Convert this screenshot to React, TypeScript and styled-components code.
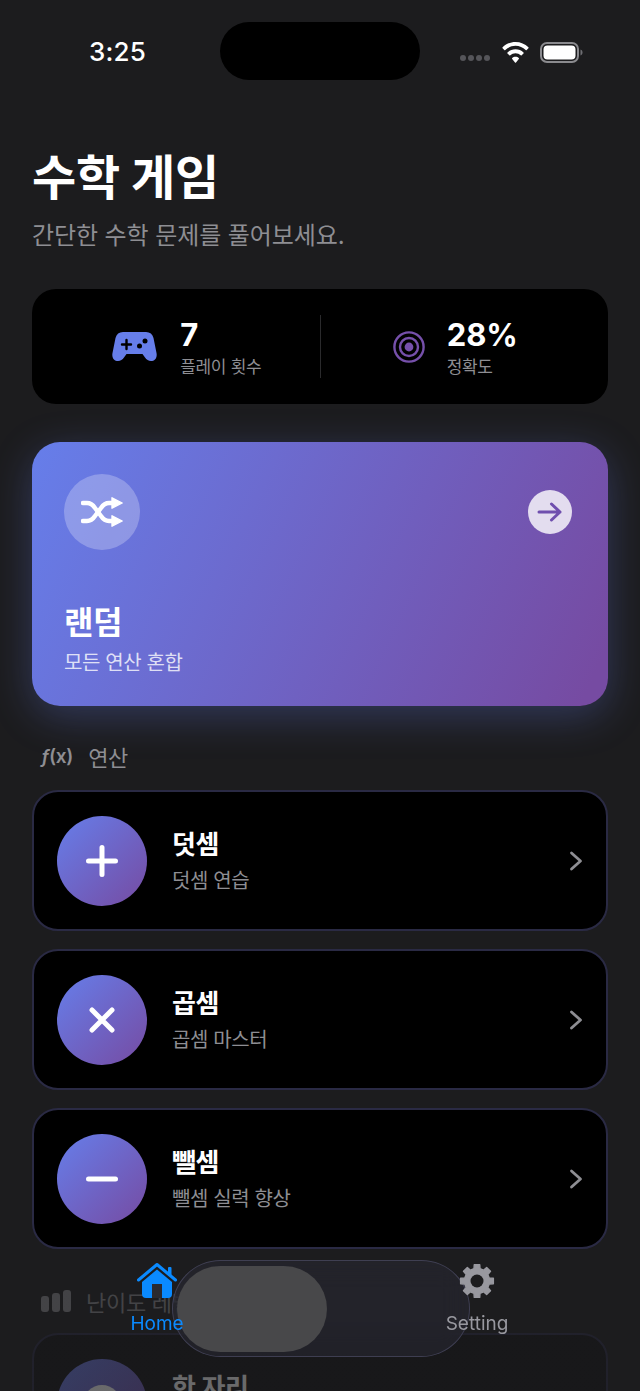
import React from "react";
import styled, { createGlobalStyle } from "styled-components";

const Global = createGlobalStyle`
  html, body { margin: 0; padding: 0; background: #1c1c1e; }
  * { box-sizing: border-box; }
`;

const FONT = `Inter, "Noto Sans CJK KR", "Noto Sans", sans-serif`;

const Screen = styled.div`
  position: relative;
  width: 640px;
  height: 1391px;
  overflow: hidden;
  background: #1c1c1e;
  font-family: ${FONT};
  color: #fff;
`;

const StatusBar = styled.div`
  display: flex;
  align-items: center;
  height: 104px;
  padding: 0 57px 0 89px;
`;
const Time = styled.div`
  font-size: 26px;
  font-weight: 500;
  line-height: 32px;
  letter-spacing: 0.2px;
`;
const Island = styled.div`
  position: absolute;
  left: 220px;
  top: 22px;
  width: 200px;
  height: 58px;
  border-radius: 29px;
  background: #000;
`;
const StatusIcons = styled.div`
  margin-left: auto;
  display: flex;
  align-items: center;
  gap: 11px;
`;
const Dots = styled.div`
  display: flex;
  gap: 2px;
  margin-top: 12px;
  margin-right: 1px;
`;
const Dot = styled.span`
  width: 6px;
  height: 6px;
  border-radius: 50%;
  background: #55555a;
`;
const Content = styled.main`
  padding: 39px 32px 0;
`;
const Title = styled.h1`
  margin: 0;
  font-size: 48px;
  line-height: 70px;
  font-weight: 700;
  letter-spacing: -0.2px;
`;
const Subtitle = styled.p`
  margin: 6px 0 0;
  font-size: 24px;
  line-height: 34px;
  color: #8e8e93;
  letter-spacing: -0.1px;
`;
const StatsCard = styled.section`
  margin-top: 36px;
  height: 115px;
  border-radius: 24px;
  background: #000;
  display: flex;
  align-items: center;
`;
const Stat = styled.div<{ $side: "left" | "right"; $gap: number; $inset: number }>`
  flex: 0 0 calc(50% - 0.5px);
  display: flex;
  align-items: center;
  justify-content: center;
  gap: ${(p) => p.$gap}px;
  padding-${(p) => p.$side}: ${(p) => p.$inset}px;
`;
const StatText = styled.div`
  display: flex;
  flex-direction: column;
`;
const StatValue = styled.div`
  font-size: 31px;
  line-height: 40px;
  font-weight: 700;
`;
const StatLabel = styled.div`
  font-size: 17px;
  line-height: 24px;
  color: #8e8e93;
  letter-spacing: -0.3px;
`;
const Divider = styled.div`
  width: 1px;
  height: 63px;
  background: #2a2a2c;
`;
const RandomCard = styled.section`
  margin-top: 38px;
  height: 264px;
  border-radius: 28px;
  padding: 32px 32px 28px;
  background: linear-gradient(115deg, #667eea 0%, #764ba2 96%);
  box-shadow: 0 10px 40px rgba(102, 126, 234, 0.3);
  display: flex;
  flex-direction: column;
`;
const RandomTop = styled.div`
  display: flex;
  align-items: center;
  justify-content: space-between;
  padding-right: 4px;
`;
const ShuffleBadge = styled.div`
  width: 76px;
  height: 76px;
  border-radius: 50%;
  background: rgba(255, 255, 255, 0.25);
  display: grid;
  place-items: center;
`;
const ArrowBadge = styled.div`
  width: 44px;
  height: 44px;
  border-radius: 50%;
  background: rgba(255, 255, 255, 0.8);
  display: grid;
  place-items: center;
`;
const RandomTitle = styled.div`
  margin-top: auto;
  font-size: 32px;
  line-height: 46px;
  font-weight: 700;
  letter-spacing: -0.4px;
`;
const RandomSub = styled.div`
  margin-top: 2px;
  font-size: 20px;
  line-height: 30px;
  color: rgba(255, 255, 255, 0.8);
  letter-spacing: -0.4px;
`;
const SectionHeader = styled.div<{ $top: number }>`
  display: flex;
  align-items: center;
  gap: 15px;
  padding-left: 9px;
  height: 30px;
  margin-top: ${(p) => p.$top}px;
  color: #8e8e93;
  font-size: 22px;
  letter-spacing: -0.3px;
`;
const FxGlyph = styled.span`
  font-size: 19px;
  font-weight: 600;
`;
const List = styled.div<{ $top: number }>`
  margin-top: ${(p) => p.$top}px;
  display: flex;
  flex-direction: column;
  gap: 18px;
`;
const OpRow = styled.article<{ $faint?: boolean }>`
  height: 141px;
  flex: none;
  border-radius: 26px;
  background: ${(p) => (p.$faint ? "#101012" : "#000")};
  border: 2px solid #2a2a44;
  display: flex;
  align-items: center;
  padding: 0 23px;
`;
const OpCircle = styled.div`
  width: 90px;
  height: 90px;
  border-radius: 50%;
  flex: none;
  background: linear-gradient(135deg, #667eea 0%, #764ba2 100%);
  display: grid;
  place-items: center;
`;
const OpText = styled.div`
  margin-left: 25px;
  padding-top: 1px;
  flex: 1;
`;
const OpTitle = styled.div`
  font-size: 26px;
  line-height: 36px;
  font-weight: 700;
  letter-spacing: -0.3px;
`;
const OpSub = styled.div`
  margin-top: 3px;
  font-size: 20px;
  line-height: 30px;
  color: #8e8e93;
  letter-spacing: -0.4px;
`;
const BottomFade = styled.div`
  position: absolute;
  left: 0;
  right: 0;
  top: 1250px;
  bottom: 0;
  background: linear-gradient(
    180deg,
    rgba(28, 28, 30, 0) 0%,
    rgba(28, 28, 30, 0.66) 12%,
    rgba(28, 28, 30, 0.66) 100%
  );
`;
const TabBar = styled.nav`
  position: absolute;
  left: 0;
  right: 0;
  top: 1260px;
  height: 97px;
`;
const Glass = styled.div`
  position: absolute;
  left: 172px;
  top: 0;
  width: 298px;
  height: 97px;
  border-radius: 49px;
  background: rgba(44, 44, 58, 0.45);
  border: 1px solid rgba(110, 110, 150, 0.38);
  backdrop-filter: blur(14px);
`;
const GlassThumb = styled.div`
  position: absolute;
  left: 4px;
  top: 5px;
  width: 150px;
  height: 86px;
  border-radius: 43px;
  background: #48484a;
`;
const TabItem = styled.div<{ $center: number; $active?: boolean }>`
  position: absolute;
  top: 3px;
  left: ${(p) => p.$center - 50}px;
  width: 100px;
  display: flex;
  flex-direction: column;
  align-items: center;
  font-size: 19px;
  line-height: 24px;
  color: ${(p) => (p.$active ? "#0a8aff" : "#98989f")};
`;
const TabIcon = styled.div`
  height: 36px;
  margin-bottom: 13px;
  display: flex;
  align-items: center;
  justify-content: center;
`;

const Wifi = () => (
  <svg width="27" height="21" viewBox="0 0 27 21" fill="#fff">
    <path d="M13.5 0C8.4 0 3.9 2 .6 5.2c-.3.3-.3.7 0 1l1.7 1.8c.3.3.7.3 1 0C6 5.4 9.6 3.8 13.5 3.8s7.5 1.6 10.2 4.2c.3.3.7.3 1 0l1.7-1.8c.3-.3.3-.7 0-1C23.1 2 18.6 0 13.5 0z" />
    <path d="M13.5 7.3c-3.1 0-5.9 1.2-8 3.2-.3.3-.3.7 0 1l1.8 1.8c.3.3.7.3 1 0 1.4-1.3 3.2-2.1 5.2-2.1s3.8.8 5.2 2.1c.3.3.7.3 1 0l1.8-1.8c.3-.3.3-.7 0-1-2.1-2-4.9-3.2-8-3.2z" />
    <path d="M13.5 14.8c-1.3 0-2.4.5-3.3 1.3-.3.3-.3.7 0 1l2.8 3.3c.3.3.7.3 1 0l2.8-3.3c.3-.3.3-.7 0-1-.9-.8-2-1.3-3.3-1.3z" />
  </svg>
);

const Battery = () => (
  <svg width="43" height="21" viewBox="0 0 43 21">
    <rect x="1" y="1" width="37" height="19" rx="6" fill="none" stroke="#8a8a8e" strokeWidth="2" />
    <rect x="3.5" y="3.5" width="32" height="14" rx="4" fill="#fff" />
    <path d="M40.5 7.5c1.3.4 2 1.6 2 3s-.7 2.6-2 3z" fill="#6e6e73" />
  </svg>
);

const GamePad = () => (
  <svg width="45" height="29" viewBox="0 0 45 29">
    <path
      d="M11 0H34C38 0 40.5 2 41.5 6L44.5 21C45.5 26 42.5 29 39 29C36.5 29 34.5 27.5 33 25.5L30.5 22H14.5L12 25.5C10.5 27.5 8.5 29 6 29C2.5 29 -.5 26 .5 21L3.5 6C4.5 2 7 0 11 0Z"
      fill="#667eea"
    />
    <path d="M14.5 8v9M10 12.5h9" stroke="#000" strokeWidth="2.4" strokeLinecap="round" />
    <circle cx="27.5" cy="14" r="2.5" fill="#000" />
    <circle cx="33" cy="9" r="2.5" fill="#000" />
  </svg>
);

const Target = () => (
  <svg width="32" height="32" viewBox="0 0 32 32" fill="none" stroke="#7650ab" strokeWidth="2.4">
    <circle cx="16" cy="16" r="14.6" />
    <circle cx="16" cy="16" r="9" />
    <circle cx="16" cy="16" r="4.4" fill="#7650ab" stroke="none" />
  </svg>
);

const Shuffle = () => (
  <svg width="42" height="30" viewBox="0 0 42 30" fill="none" stroke="#fff" strokeWidth="4.4" strokeLinecap="round" strokeLinejoin="round">
    <path d="M2 6h4c4 0 6 2 8 5l6 8c2 3 4 5 8 5h4" />
    <path d="M2 24h4c4 0 6-2 8-5l6-8c2-3 4-5 8-5h4" />
    <path d="M31 .8 41.2 6 31 11.2z" fill="#fff" strokeWidth="1.4" />
    <path d="M31 18.8 41.2 24 31 29.2z" fill="#fff" strokeWidth="1.4" />
  </svg>
);

const ArrowRight = () => (
  <svg width="26" height="22" viewBox="0 0 26 22" fill="none" stroke="#6f4fae" strokeWidth="3" strokeLinecap="round" strokeLinejoin="round">
    <path d="M2 11h21M14.5 3 23 11l-8.5 8" />
  </svg>
);

const Chevron = () => (
  <svg width="14" height="20" viewBox="0 0 14 20" fill="none" stroke="#8e8e93" strokeWidth="2.8" strokeLinecap="round" strokeLinejoin="round">
    <path d="M2.5 2 11.5 10l-9 8" />
  </svg>
);

type OpKind = "plus" | "times" | "minus" | "dot";

const OpIcon = ({ kind }: { kind: OpKind }) => (
  <svg width="38" height="38" viewBox="0 0 38 38" stroke="#fff" strokeWidth="5" strokeLinecap="round">
    {kind === "plus" && <path d="M19 5.5v27M5.5 19h27" />}
    {kind === "times" && <path d="M9 9l20 20M29 9 9 29" />}
    {kind === "minus" && <path d="M5.5 19h27" />}
    {kind === "dot" && <circle cx="19" cy="19" r="19" fill="#fff" stroke="none" />}
  </svg>
);

const Bars = () => (
  <svg width="30" height="22" viewBox="0 0 30 22" fill="#8e8e93">
    <rect x="0" y="6" width="8" height="16" rx="3" />
    <rect x="11" y="3" width="8" height="19" rx="3" />
    <rect x="22" y="0" width="8" height="22" rx="3" />
  </svg>
);

const HomeIcon = () => (
  <svg width="40" height="36" viewBox="0 0 40 36">
    <path d="M1.5 17 20 1.5 38.5 17" fill="none" stroke="#0a8aff" strokeWidth="3" strokeLinecap="round" strokeLinejoin="round" />
    <rect x="31" y="4" width="3.5" height="9" rx="1" fill="#0a8aff" />
    <path d="M20 6.5 35 19v12a4 4 0 0 1-4 4H9a4 4 0 0 1-4-4V19z" fill="#0a8aff" />
    <rect x="15" y="21" width="10" height="14" fill="#2a2a30" />
  </svg>
);

const gearPath = (() => {
  const teeth = 8;
  const pts: string[] = [];
  for (let i = 0; i < teeth; i++) {
    const a = (i / teeth) * Math.PI * 2 - Math.PI / 2;
    const step = Math.PI / teeth;
    const corner = (ang: number, r: number) =>
      `${(18 + r * Math.cos(ang)).toFixed(2)} ${(18 + r * Math.sin(ang)).toFixed(2)}`;
    pts.push(corner(a - step * 0.42, 16.6), corner(a + step * 0.42, 16.6), corner(a + step * 0.62, 12.6), corner(a + step * 1.38, 12.6));
  }
  return `M${pts.join("L")}Z`;
})();

const GearIcon = () => (
  <svg width="36" height="36" viewBox="0 0 36 36">
    <path d={gearPath} fill="#98989f" stroke="#98989f" strokeWidth="1.4" strokeLinejoin="round" />
    <circle cx="18" cy="18" r="6.5" fill="#1c1c1e" />
  </svg>
);

const ops: { kind: OpKind; title: string; sub: string }[] = [
  { kind: "plus", title: "덧셈", sub: "덧셈 연습" },
  { kind: "times", title: "곱셈", sub: "곱셈 마스터" },
  { kind: "minus", title: "뺄셈", sub: "뺄셈 실력 향상" },
];

export default function App() {
  return (
    <Screen>
      <Global />
      <StatusBar>
        <Time>3:25</Time>
        <StatusIcons>
          <Dots>
            <Dot />
            <Dot />
            <Dot />
            <Dot />
          </Dots>
          <Wifi />
          <Battery />
        </StatusIcons>
      </StatusBar>
      <Island />
      <Content>
        <Title>수학 게임</Title>
        <Subtitle>간단한 수학 문제를 풀어보세요.</Subtitle>
        <StatsCard>
          <Stat $side="left" $gap={23} $inset={22}>
            <GamePad />
            <StatText>
              <StatValue>7</StatValue>
              <StatLabel>플레이 횟수</StatLabel>
            </StatText>
          </Stat>
          <Divider />
          <Stat $side="right" $gap={22} $inset={18}>
            <Target />
            <StatText>
              <StatValue>28%</StatValue>
              <StatLabel>정확도</StatLabel>
            </StatText>
          </Stat>
        </StatsCard>
        <RandomCard>
          <RandomTop>
            <ShuffleBadge>
              <Shuffle />
            </ShuffleBadge>
            <ArrowBadge>
              <ArrowRight />
            </ArrowBadge>
          </RandomTop>
          <RandomTitle>랜덤</RandomTitle>
          <RandomSub>모든 연산 혼합</RandomSub>
        </RandomCard>
        <SectionHeader $top={35}>
          <FxGlyph>
            <i>ƒ</i>(x)
          </FxGlyph>
          연산
        </SectionHeader>
        <List $top={19}>
          {ops.map((op) => (
            <OpRow key={op.kind}>
              <OpCircle>
                <OpIcon kind={op.kind} />
              </OpCircle>
              <OpText>
                <OpTitle>{op.title}</OpTitle>
                <OpSub>{op.sub}</OpSub>
              </OpText>
              <Chevron />
            </OpRow>
          ))}
        </List>
        <SectionHeader $top={37}>
          <Bars />
          난이도 레벨
        </SectionHeader>
        <List $top={17}>
          <OpRow $faint>
            <OpCircle>
              <OpIcon kind="dot" />
            </OpCircle>
            <OpText>
              <OpTitle>한 자리</OpTitle>
              <OpSub>한 자리 수 계산</OpSub>
            </OpText>
            <Chevron />
          </OpRow>
        </List>
      </Content>
      <BottomFade />
      <TabBar>
        <Glass>
          <GlassThumb />
        </Glass>
        <TabItem $center={157} $active>
          <TabIcon>
            <HomeIcon />
          </TabIcon>
          Home
        </TabItem>
        <TabItem $center={477}>
          <TabIcon>
            <GearIcon />
          </TabIcon>
          Setting
        </TabItem>
      </TabBar>
    </Screen>
  );
}
